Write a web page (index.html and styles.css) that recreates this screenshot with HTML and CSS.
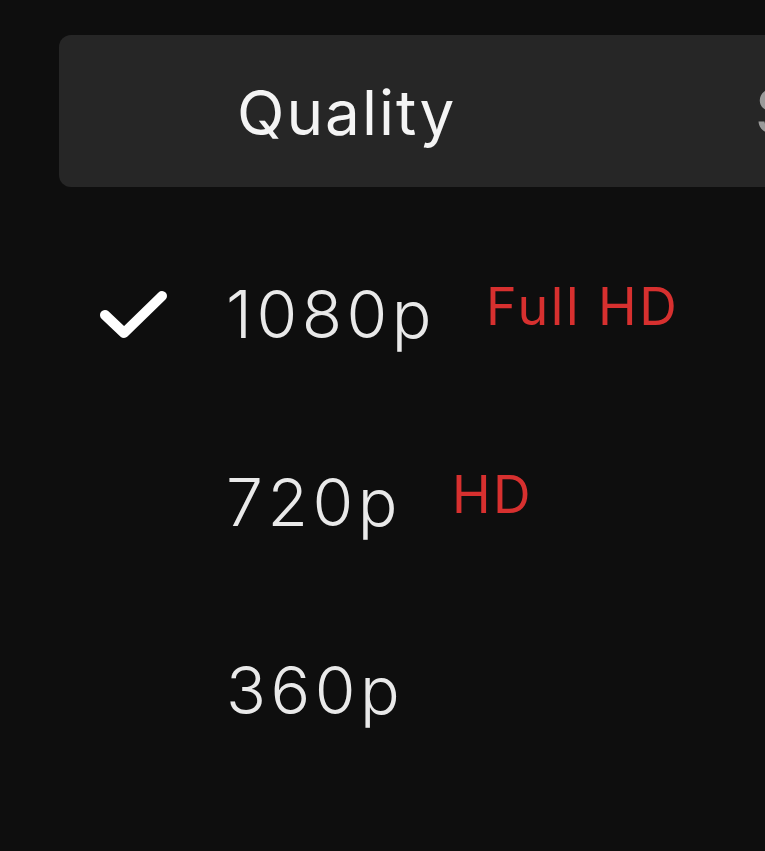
FILE: index.html
```html
<!DOCTYPE html>
<html lang="en">
<head>
<meta charset="utf-8">
<title>Playback settings</title>
<link rel="stylesheet" href="styles.css">
</head>
<body>
  <nav class="tabs">
    <span class="tab tab-active">Quality</span>
    <span class="tab">Speed</span>
  </nav>

  <ul class="options">
    <li class="option">
      <span class="check">
        <svg width="70" height="56" viewBox="0 0 70 56" aria-hidden="true">
          <polyline points="6,27 25,45 63,8" fill="none" stroke="#ffffff" stroke-width="10" stroke-linecap="round" stroke-linejoin="round"/>
        </svg>
      </span>
      <span class="res">
        <span class="res-value">1080p</span>
        <span class="res-tag">Full HD</span>
      </span>
    </li>
    <li class="option">
      <span class="check"></span>
      <span class="res">
        <span class="res-value">720p</span>
        <span class="res-tag">HD</span>
      </span>
    </li>
    <li class="option">
      <span class="check"></span>
      <span class="res">
        <span class="res-value">360p</span>
      </span>
    </li>
  </ul>
</body>
</html>
```

FILE: styles.css
```css
html, body {
  margin: 0;
  padding: 0;
}

body {
  background: #0e0e0e;
  font-family: Inter, "Open Sans", sans-serif;
  overflow: hidden;
  width: 765px;
  height: 851px;
}

/* Tab strip across the top */
.tabs {
  display: flex;
  align-items: center;
  margin: 35px 0 0 59px;
  width: 900px;
  height: 152px;
  background: #262626;
  border-radius: 12px 0 0 12px;
  white-space: nowrap;
}

.tab {
  font-size: 62px;
  line-height: 1;
  letter-spacing: 2px;
  color: #9a9a9a;
}

.tab-active {
  color: #f4f4f4;
  margin-left: 178px;
  width: 518px;
  margin-top: 4px;
}

/* Resolution list */
.options {
  list-style: none;
  margin: 33px 0 0 0;
  padding: 0;
}

.option {
  display: flex;
  align-items: center;
  height: 188px;
}

.check {
  display: flex;
  width: 70px;
  height: 56px;
  margin-left: 99px;
  margin-top: 4px;
}

.res {
  display: flex;
  align-items: flex-start;
  margin-left: 57px;
}

.res-value {
  font-size: 66px;
  font-weight: 300;
  line-height: 66px;
  letter-spacing: 4.5px;
  color: #e9e9e9;
}

.res-tag {
  font-size: 52px;
  line-height: 52px;
  color: #d7302f;
  margin-left: 50px;
  letter-spacing: 2.5px;
}
```
